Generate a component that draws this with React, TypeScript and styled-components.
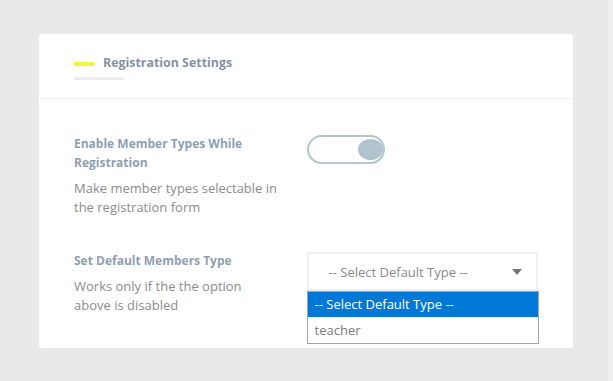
import React, { FC } from 'react'
import styled, { createGlobalStyle } from 'styled-components'

const GlobalStyle = createGlobalStyle`
	html, body {
		margin: 0;
		padding: 0;
		background: #e9e9e9;
	}
	body {
		min-height: 381px;
		box-shadow: inset -5px 0 0 #efefef;
		font-family: 'Open Sans', 'Liberation Sans', sans-serif;
	}
`

const Page = styled.div`
	padding: 34px 40px 30px 39px;
`

const Card = styled.section`
	width: 534px;
	background: #ffffff;
	border-radius: 3px;
`

const Header = styled.header`
	padding: 20px 35px 18px;
	border-bottom: 1px solid #f2f2f2;
`

const TitleRow = styled.div`
	display: flex;
	align-items: center;
	gap: 9px;
	height: 18px;
`

const Accent = styled.span`
	width: 20px;
	height: 4px;
	margin-top: 1px;
	background: #f7f23a;
`

const Title = styled.h2`
	margin: 0;
	font-size: 12.4px;
	line-height: 18px;
	font-weight: 700;
	color: #8991a5;
`

const Underline = styled.div`
	width: 50px;
	height: 3px;
	margin-top: 5px;
	background: #ececec;
`

const Body = styled.div`
	padding: 35px 35px 33px;
	display: flex;
	flex-direction: column;
	gap: 34px;
`

const Row = styled.div`
	display: flex;
	gap: 28px;
`

const Info = styled.div<{ $gap: number }>`
	width: 205px;
	display: flex;
	flex-direction: column;
	gap: ${(p) => p.$gap}px;
`

const Label = styled.div`
	font-size: 12px;
	line-height: 19px;
	font-weight: 700;
	color: #8f9fb1;
`

const Desc = styled.div`
	font-size: 13px;
	line-height: 19px;
	color: #8c8c8c;
`

const Toggle = styled.div`
	position: relative;
	box-sizing: border-box;
	width: 78px;
	height: 29px;
	margin-top: 1px;
	border: 2px solid #b3c6d0;
	border-radius: 15px;
	background: #fff;
`

const Knob = styled.span`
	position: absolute;
	right: 0;
	top: 2px;
	width: 25px;
	height: 21px;
	border-radius: 50%;
	background: #b0c4ce;
`

const SelectWrap = styled.div`
	position: relative;
	width: 232px;
	margin-top: 1px;
`

const SelectBox = styled.div`
	box-sizing: border-box;
	height: 39px;
	border: 2px solid #efefef;
	display: flex;
	align-items: center;
	justify-content: space-between;
	padding: 0 14px 0 20px;
	font-size: 13px;
	color: #8a8a8a;
`

const Arrow = styled.span`
	width: 0;
	height: 0;
	margin-top: 1px;
	border-left: 5px solid transparent;
	border-right: 5px solid transparent;
	border-top: 6px solid #777;
`

const Options = styled.ul`
	position: absolute;
	left: 0;
	top: 39px;
	width: 232px;
	box-sizing: border-box;
	margin: 0;
	padding: 0;
	list-style: none;
	border: 1px solid #a3a3a3;
	background: #fff;
`

const Option = styled.li<{ $active?: boolean }>`
	height: ${(p) => (p.$active ? 25 : 26)}px;
	line-height: ${(p) => (p.$active ? 25 : 26)}px;
	padding: 0 7px;
	font-size: 13px;
	background: ${(p) => (p.$active ? '#0078d7' : '#fff')};
	color: ${(p) => (p.$active ? '#fff' : '#7a7a7a')};
`

const App: FC = () => {
	return (
		<>
			<GlobalStyle />
			<Page>
				<Card>
					<Header>
						<TitleRow>
							<Accent />
							<Title>Registration Settings</Title>
						</TitleRow>
						<Underline />
					</Header>
					<Body>
						<Row>
							<Info $gap={7}>
								<Label>Enable Member Types While Registration</Label>
								<Desc>Make member types selectable in the registration form</Desc>
							</Info>
							<Toggle>
								<Knob />
							</Toggle>
						</Row>
						<Row>
							<Info $gap={7}>
								<Label>Set Default Members Type</Label>
								<Desc>Works only if the the option above is disabled</Desc>
							</Info>
							<SelectWrap>
								<SelectBox>
									<span>-- Select Default Type --</span>
									<Arrow />
								</SelectBox>
								<Options>
									<Option $active>-- Select Default Type --</Option>
									<Option>teacher</Option>
								</Options>
							</SelectWrap>
						</Row>
					</Body>
				</Card>
			</Page>
		</>
	)
}

export default App
